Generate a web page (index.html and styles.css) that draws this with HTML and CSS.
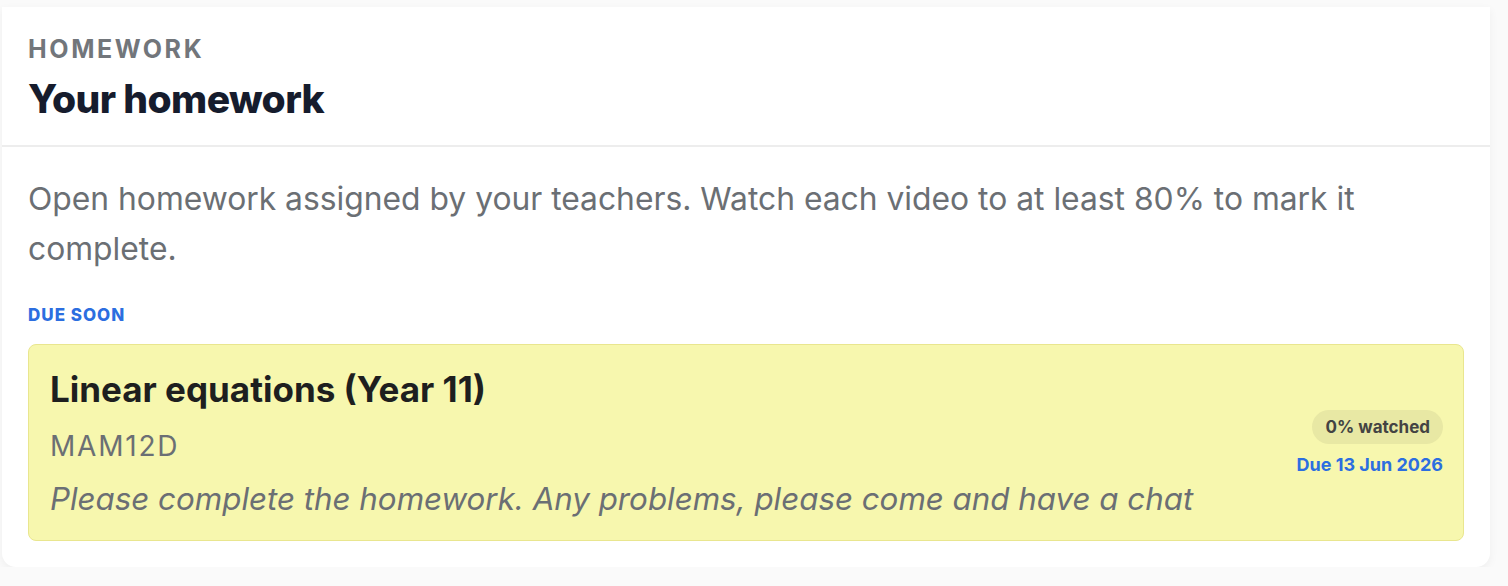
FILE: index.html
```html
<!DOCTYPE html>
<html lang="en">
<head>
    <meta charset="UTF-8">
    <meta name="viewport" content="width=device-width, initial-scale=1.0">
    <title>Your homework</title>
    <link rel="stylesheet" href="styles.css">
</head>
<body>

<div class="card">
    <div class="card-header">
        <div class="eyebrow">Homework</div>
        <h2>Your homework</h2>
    </div>

    <div class="card-body">
        <p class="intro">Open homework assigned by your teachers. Watch each video to at least 80% to mark it complete.</p>

        <div class="section-label">Due soon</div>

        <!-- one row per homework item -->
        <div class="hw-item">
            <div class="hw-main">
                <div class="hw-title">Linear equations (Year 11)</div>
                <div class="hw-class">MAM12D</div>
                <div class="hw-note">Please complete the homework. Any problems, please come and have a chat</div>
            </div>
            <div class="hw-side">
                <span class="pill">0% watched</span>
                <span class="due">Due 13 Jun 2026</span>
            </div>
        </div>
    </div>
</div>

</body>
</html>
```

FILE: styles.css
```css
body {
    background-color: #fafafa;
    font-family: 'Inter', 'Noto Sans', sans-serif;
    margin: 0;
    padding: 7px 0 0 2px;
}
.card {
    width: 1488px;
    background-color: #fff;
    border-radius: 0 0 14px 14px;
    box-shadow: 0 3px 10px rgba(0, 0, 0, 0.05);
}
.card-header {
    padding: 27px 26px 22px;
    border-bottom: 2px solid #ededed;
}
.eyebrow {
    text-transform: uppercase;
    font-size: 25px;
    font-weight: bold;
    letter-spacing: 2.6px;
    color: #72767b;
    line-height: 30px;
}
h2 {
    margin: 11px 0 0;
    font-size: 39px;
    font-weight: 800;
    letter-spacing: -0.6px;
    color: #161c2d;
    line-height: 48px;
}
.card-body {
    padding: 27px 26px 26px;
}
.intro {
    margin: 0;
    font-size: 31.8px;
    line-height: 50px;
    color: #6b6f74;
}
.section-label {
    margin-top: 31px;
    text-transform: uppercase;
    font-size: 17px;
    font-weight: 800;
    letter-spacing: 1px;
    color: #2c6ee0;
    line-height: 20px;
}
.hw-item {
    margin-top: 19px;
    display: flex;
    align-items: center;
    justify-content: space-between;
    padding: 22px 20px 21px 21px;
    background-color: #f7f7ae;
    border: 1px solid #e9e68f;
    border-radius: 8px;
}
.hw-title {
    font-size: 35px;
    font-weight: bold;
    color: #1e1f1f;
    line-height: 44px;
}
.hw-class {
    margin-top: 16px;
    font-size: 28px;
    letter-spacing: 1.8px;
    color: #6b6f74;
    line-height: 38px;
}
.hw-note {
    margin-top: 14px;
    font-size: 31.3px;
    font-style: italic;
    color: #6b6f74;
    line-height: 40px;
}
.hw-side {
    display: flex;
    flex-direction: column;
    align-items: flex-end;
    gap: 10px;
}
.pill {
    padding: 6px 13px;
    border-radius: 17px;
    background-color: #e8e8a4;
    color: #434343;
    font-size: 17px;
    font-weight: bold;
    line-height: 22px;
}
.due {
    color: #2c6ee0;
    font-size: 18px;
    font-weight: bold;
    line-height: 22px;
}
```
